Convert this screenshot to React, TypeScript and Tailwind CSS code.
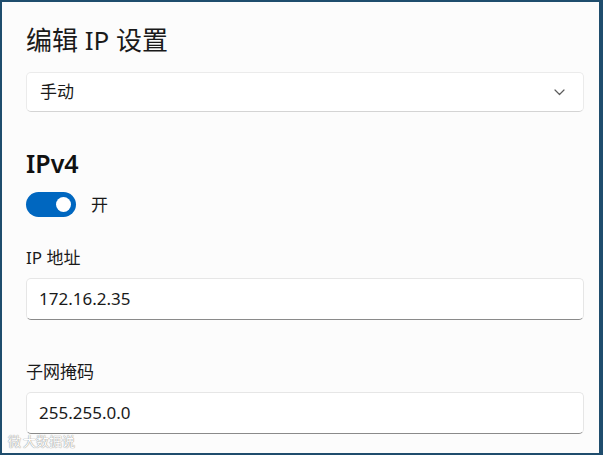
import React, { useState } from "react";

const font = { fontFamily: '"Segoe UI", "Noto Sans", "Noto Sans CJK SC", sans-serif' };

const TextField = ({ value }: { value: string }) => (
  <div className="h-[42px] w-[558px] rounded-[5px] border border-[#e6e6e6] border-b-[#8a8a8a] bg-white px-[12px] flex items-center">
    <span className="text-[17px] text-[#1a1a1a]">{value}</span>
  </div>
);

const App = () => {
  const [on, setOn] = useState(true);

  return (
    <div
      className="relative w-[603px] h-[455px] overflow-hidden bg-[#fcfcfc] border-t-2 border-l-2 border-r-4 border-b-2 border-[#1f4d6d]"
      style={font}
    >
      <div className="pl-[24px] pt-[20px] flex flex-col">
        <h1 className="text-[26px] leading-[36px] text-[#1a1a1a]">编辑 IP 设置</h1>

        {/* dropdown */}
        <div className="mt-[14px] h-[40px] w-[558px] rounded-[5px] border border-[#ebebeb] border-b-[#d4d4d4] bg-white pl-[13px] pr-[18px] flex items-center justify-between">
          <span className="text-[17px] text-[#1a1a1a]">手动</span>
          <svg width="11" height="7" viewBox="0 0 11 7" fill="none">
            <path d="M1 1l4.5 4.5L10 1" stroke="#5c5c5c" strokeWidth="1.2" strokeLinecap="round" strokeLinejoin="round" />
          </svg>
        </div>

        <h2 className="mt-[35px] text-[25px] leading-[32px] font-semibold text-[#111]">IPv4</h2>

        {/* toggle */}
        <div className="mt-[13px] flex items-center gap-[15px]">
          <button
            onClick={() => setOn(!on)}
            className="w-[50px] h-[25px] rounded-full bg-[#0067c0] flex items-center justify-end pr-[5px]"
          >
            <span className="w-[15px] h-[15px] rounded-full bg-white" />
          </button>
          <span className="text-[17px] text-[#1a1a1a]">{on ? "开" : "关"}</span>
        </div>

        <div className="mt-[28px] text-[17px] leading-[24px] text-[#1a1a1a]">IP 地址</div>
        <div className="mt-[8px]">
          <TextField value="172.16.2.35" />
        </div>

        <div className="mt-[40px] text-[17px] leading-[24px] text-[#1a1a1a]">子网掩码</div>
        <div className="mt-[8px]">
          <TextField value="255.255.0.0" />
        </div>
      </div>

      {/* watermark */}
      <div className="absolute left-[6px] bottom-[5px] flex items-center gap-[2px] text-[13px] leading-none text-white opacity-90 [text-shadow:0_0_1px_#8a8a8a,0_0_1px_#8a8a8a]">
        <span>微</span>
        <span>大数据说</span>
      </div>
    </div>
  );
};

export default App;
